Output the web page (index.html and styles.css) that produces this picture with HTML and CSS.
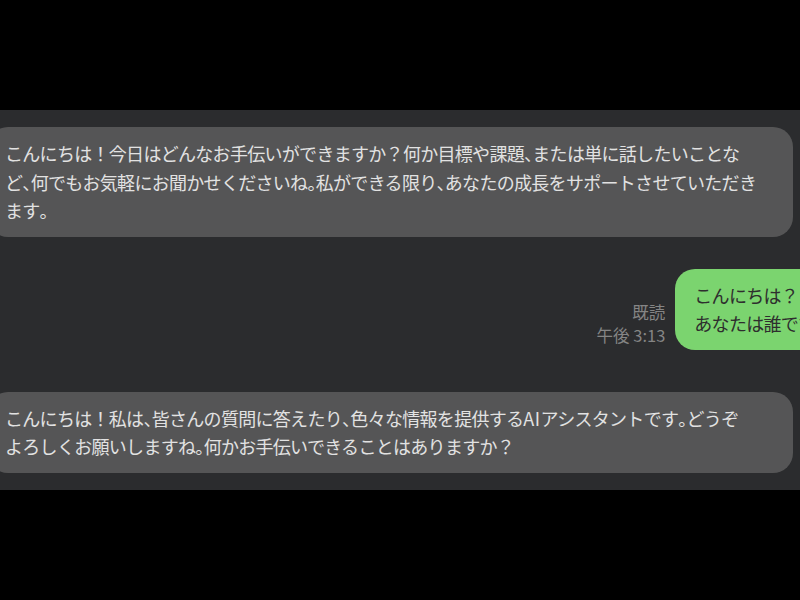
FILE: index.html
```html
<!DOCTYPE html>
<html lang="ja">
<head>
<meta charset="utf-8">
<link rel="stylesheet" href="styles.css">
</head>
<body>
<div class="panel">
  <div class="row row-in first">
    <div class="bubble in">こんにちは！今日はどんなお手伝いができますか？何か目標や課題<span class="h">、</span>または単に話したいことな<br>ど<span class="h">、</span>何でもお気軽にお聞かせくださいね<span class="h">。</span>私ができる限り<span class="h">、</span>あなたの成長をサポートさせていただき<br>ます<span class="h">。</span></div>
  </div>
  <div class="row row-out">
    <div class="meta">
      <div>既読</div>
      <div>午後 3:13</div>
    </div>
    <div class="bubble out">こんにちは？<br>あなたは誰ですか？</div>
  </div>
  <div class="row row-in last">
    <div class="bubble in">こんにちは！私は<span class="h">、</span>皆さんの質問に答えたり<span class="h">、</span>色々な情報を提供する<span class="ai">AI</span>アシスタントです<span class="h">。</span>どうぞ<br>よろしくお願いしますね<span class="h">。</span>何かお手伝いできることはありますか？</div>
  </div>
</div>
</body>
</html>
```

FILE: styles.css
```css
html, body {
  margin: 0;
  padding: 0;
  background: #000;
  height: 600px;
  overflow: hidden;
}

body {
  padding-top: 110px;
  box-sizing: border-box;
  font-family: "Noto Sans CJK JP", "Noto Sans", sans-serif;
}

.panel {
  background: #2b2c2e;
  width: 800px;
  padding: 17px 0 17px;
  box-sizing: border-box;
  overflow: hidden;
  display: flex;
  flex-direction: column;
}

.row {
  display: flex;
}

.row-in {
  margin-left: -12px;
}

.row-out {
  justify-content: flex-end;
  align-items: flex-end;
  gap: 10px;
  margin-top: 32px;
  margin-right: -69px;
}

.last {
  margin-top: 42px;
}

.bubble {
  font-size: 18px;
  letter-spacing: -0.7px;
  line-height: 28.5px;
  padding: 12px 28px 12px 17px;
  border-radius: 20px;
  white-space: nowrap;
}

.bubble.in {
  background: #555556;
  color: #e2e2e2;
  width: 760px;
}

.bubble.out {
  background: #7bd46f;
  color: #2e2e2e;
  padding: 12px 19px;
}

.h {
  font-feature-settings: "halt";
}

.ai {
  letter-spacing: 0.5px;
}

.meta {
  font-size: 16.5px;
  line-height: 23px;
  color: #858585;
  text-align: right;
  padding-bottom: 3px;
  white-space: nowrap;
}
```
